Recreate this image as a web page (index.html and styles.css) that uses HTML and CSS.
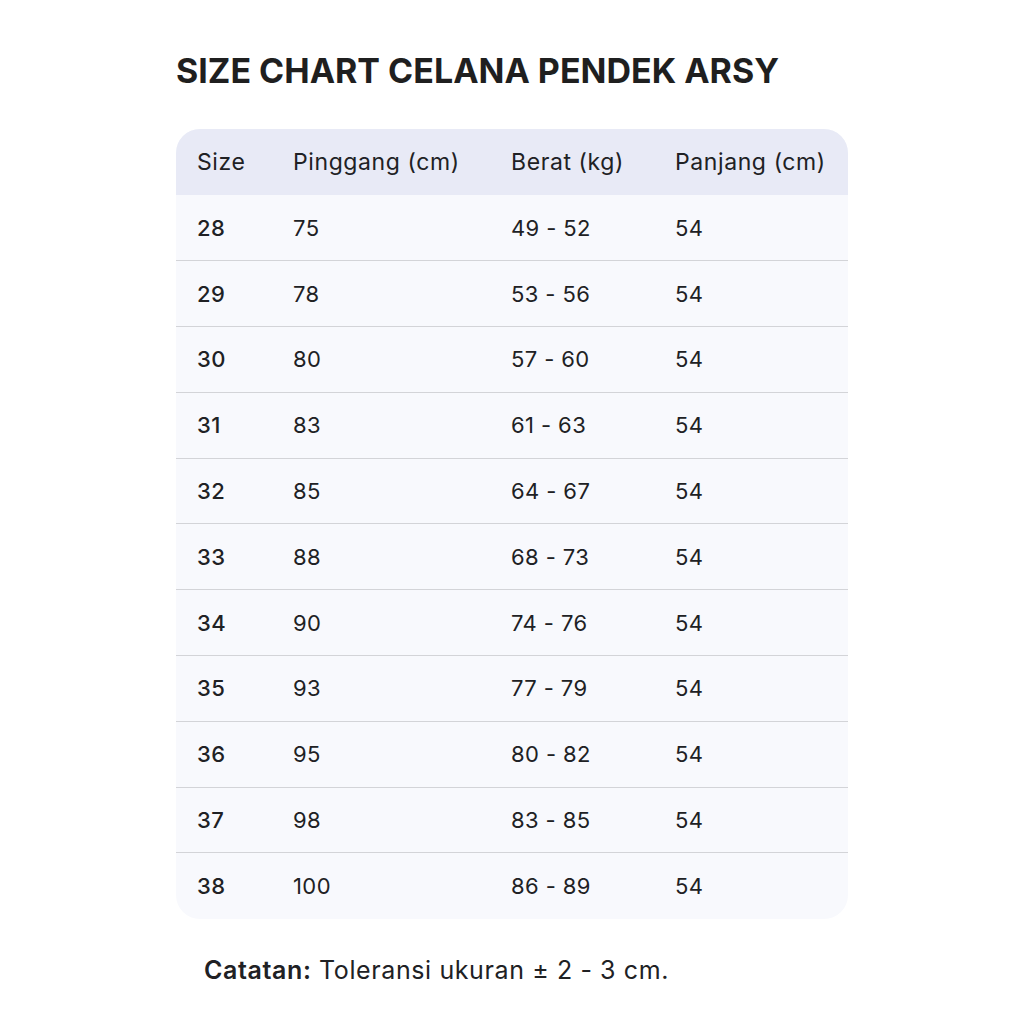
FILE: index.html
```html
<!DOCTYPE html>
<html lang="id">
<head>
<meta charset="utf-8">
<title>Size Chart Celana Pendek Arsy</title>
<link rel="stylesheet" href="styles.css">
</head>
<body>
<main class="page">
  <h1 class="title">SIZE CHART CELANA PENDEK ARSY</h1>
  <div class="card">
    <table class="chart">
      <thead>
        <tr><th class="c1">Size</th><th class="c2">Pinggang (cm)</th><th class="c3">Berat (kg)</th><th class="c4">Panjang (cm)</th></tr>
      </thead>
      <tbody>
        <tr><td class="size">28</td><td>75</td><td>49 - 52</td><td>54</td></tr>
        <tr><td class="size">29</td><td>78</td><td>53 - 56</td><td>54</td></tr>
        <tr><td class="size">30</td><td>80</td><td>57 - 60</td><td>54</td></tr>
        <tr><td class="size">31</td><td>83</td><td>61 - 63</td><td>54</td></tr>
        <tr><td class="size">32</td><td>85</td><td>64 - 67</td><td>54</td></tr>
        <tr><td class="size">33</td><td>88</td><td>68 - 73</td><td>54</td></tr>
        <tr><td class="size">34</td><td>90</td><td>74 - 76</td><td>54</td></tr>
        <tr><td class="size">35</td><td>93</td><td>77 - 79</td><td>54</td></tr>
        <tr><td class="size">36</td><td>95</td><td>80 - 82</td><td>54</td></tr>
        <tr><td class="size">37</td><td>98</td><td>83 - 85</td><td>54</td></tr>
        <tr><td class="size">38</td><td>100</td><td>86 - 89</td><td>54</td></tr>
      </tbody>
    </table>
  </div>
  <p class="note"><strong>Catatan:</strong> Toleransi ukuran ± 2 - 3 cm.</p>
</main>
</body>
</html>
```

FILE: styles.css
```css
html, body {
  margin: 0;
  padding: 0;
  background: #ffffff;
}
body {
  font-family: Inter, Roboto, "Liberation Sans", sans-serif;
  color: #202124;
}
.page {
  width: 672px;
  margin: 0 auto;
  padding-top: 51px;
}
.title {
  margin: 0 0 38px 0;
  font-size: 34px;
  font-weight: 700;
  line-height: 40px;
  color: #1f1f1f;
}
.card {
  border-radius: 24px;
  overflow: hidden;
  background: #f8f9fd;
}
.chart {
  width: 100%;
  border-collapse: collapse;
  table-layout: fixed;
}
.chart th,
.chart td {
  box-sizing: border-box;
  padding: 0 0 0 21px;
  text-align: left;
  white-space: nowrap;
}
.chart th {
  background: #e8eaf6;
  height: 66px;
  font-weight: 400;
  font-size: 23px;
  letter-spacing: 0.6px;
  color: #202124;
}
.c1 { width: 96px; }
.c2 { width: 218px; }
.c3 { width: 164px; }
.c4 { width: 194px; }
.chart td {
  height: 65.8px;
  font-size: 22px;
  letter-spacing: 0.4px;
  color: #202124;
  border-top: 1px solid #d3d4d8;
}
.chart tbody tr:first-child td {
  border-top: none;
}
.chart td.size {
  font-weight: 500;
}
.note {
  margin: 36px 0 0 28px;
  font-size: 25px;
  letter-spacing: 0.6px;
  color: #202124;
}
.note strong {
  font-weight: 600;
}
```
